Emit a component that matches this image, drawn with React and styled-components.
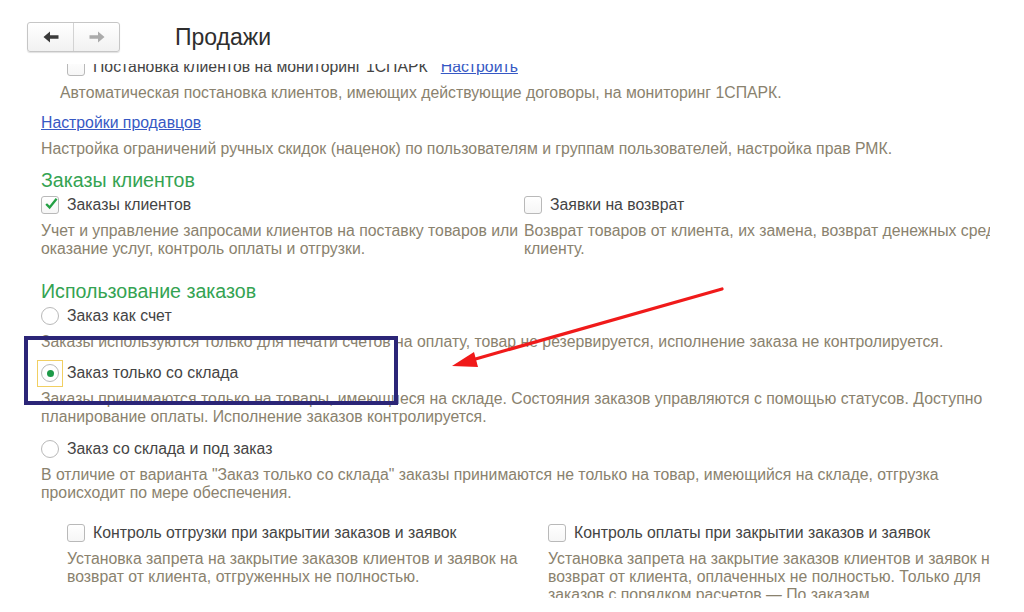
import React from "react";
import styled, { createGlobalStyle, css } from "styled-components";

const Global = createGlobalStyle`
  html, body { margin: 0; padding: 0; background: #fff; }
  body { font-family: "Liberation Sans", Arial, sans-serif; }
`;

const Page = styled.div`
  position: relative;
  width: 1024px;
  height: 612px;
  overflow: hidden;
  background: #fff;
  display: flex;
  flex-direction: column;
`;

const Header = styled.header`
  flex: none;
  height: 64px;
  box-sizing: border-box;
  padding: 22px 0 0 27px;
  display: flex;
  align-items: flex-start;
`;

const NavGroup = styled.div`
  display: flex;
  height: 30px;
  border: 1px solid #c6c6c6;
  border-radius: 3px;
  box-sizing: border-box;
  background: linear-gradient(#ffffff, #f1f1f1);
  box-shadow: 0 1px 1px rgba(0, 0, 0, 0.12);
`;

const NavButton = styled.div`
  width: 45px;
  display: flex;
  align-items: center;
  justify-content: center;
  & + & {
    border-left: 1px solid #d3d3d3;
  }
`;

const Title = styled.h1`
  margin: 0 0 0 55px;
  font-size: 23px;
  font-weight: normal;
  line-height: 30px;
  color: #2e2e2e;
`;

const Viewport = styled.main`
  flex: none;
  width: 990px;
  height: 534px;
  overflow: hidden;
`;

const Inner = styled.div`
  margin-top: -8px;
  padding-left: 41px;
`;

const Row = styled.div`
  display: flex;
  align-items: center;
  height: 22px;
  gap: 8px;
  margin-top: ${(p) => p.$mt || 0}px;
  padding-left: ${(p) => p.$indent || 0}px;
`;

const Label = styled.span`
  font-size: 15.8px;
  color: #444;
  white-space: nowrap;
`;

const LinkText = styled.a`
  font-size: 15.8px;
  color: #3658c4;
  text-decoration: underline;
  white-space: nowrap;
  margin-left: ${(p) => p.$ml || 0}px;
  cursor: pointer;
`;

const Desc = styled.div`
  margin-top: 6px;
  padding-left: ${(p) => p.$indent || 0}px;
  font-size: 15.8px;
  line-height: 18px;
  color: #8a826e;
  white-space: nowrap;
`;

const Heading = styled.h2`
  margin: ${(p) => p.$mt || 0}px 0 0 0;
  font-size: 19.6px;
  line-height: 24px;
  font-weight: normal;
  color: #34a352;
`;

const Columns = styled.div`
  display: grid;
  grid-template-columns: ${(p) => p.$first}px 1fr;
  margin-top: ${(p) => p.$mt || 0}px;
  padding-left: ${(p) => p.$indent || 0}px;
`;

const Column = styled.div`
  min-width: 0;
`;

const Box = styled.span`
  flex: none;
  width: 18px;
  height: 18px;
  box-sizing: border-box;
  border: 1px solid #b9b9b9;
  border-radius: 3px;
  background: linear-gradient(#ffffff, #f6f6f6);
  display: flex;
  align-items: center;
  justify-content: center;
`;

const RadioCircle = styled.span`
  position: relative;
  flex: none;
  width: 18px;
  height: 18px;
  box-sizing: border-box;
  border: 1px solid #b9b9b9;
  border-radius: 50%;
  background: #fff;
  display: flex;
  align-items: center;
  justify-content: center;
  ${(p) =>
    p.$checked &&
    css`
      &::after {
        content: "";
        width: 7px;
        height: 7px;
        border-radius: 50%;
        background: #1d9a48;
      }
    `}
  ${(p) =>
    p.$focused &&
    css`
      &::before {
        content: "";
        position: absolute;
        left: -5px;
        top: -5px;
        width: 26px;
        height: 27px;
        box-sizing: border-box;
        border: 1px solid #f1cf62;
      }
    `}
`;

const Annotation = styled.div`
  position: absolute;
  left: 24px;
  top: 336px;
  width: 374px;
  height: 69px;
  box-sizing: border-box;
  border: 4px solid #2b2577;
  pointer-events: none;
`;

const ArrowLayer = styled.svg`
  position: absolute;
  left: 0;
  top: 0;
  pointer-events: none;
`;

const NavArrow = ({ dir, color }) => (
  <svg width="16" height="12" viewBox="0 0 16 12" style={dir === "right" ? { transform: "scaleX(-1)" } : undefined}>
    <path d="M0.5 6 L7 0.5 V4.2 H15.5 V7.8 H7 V11.5 Z" fill={color} />
  </svg>
);

const Checkbox = ({ checked }) => (
  <Box>
    {checked && (
      <svg width="19" height="19" viewBox="0 0 18 18" style={{ marginTop: -4, marginLeft: 2 }}>
        <path d="M2.8 9.6 L7.2 14 L16.2 2.8" fill="none" stroke="#24a044" strokeWidth="3" strokeLinejoin="miter" />
      </svg>
    )}
  </Box>
);

const Lines = ({ lines }) =>
  lines.map((l, i) => (
    <React.Fragment key={i}>
      {i > 0 && <br />}
      {l}
    </React.Fragment>
  ));

export default function App() {
  return (
    <Page>
      <Global />
      <Header>
        <NavGroup>
          <NavButton>
            <NavArrow dir="left" color="#3a3a3a" />
          </NavButton>
          <NavButton>
            <NavArrow dir="right" color="#ababab" />
          </NavButton>
        </NavGroup>
        <Title>Продажи</Title>
      </Header>
      <Viewport>
        <Inner>
          <Row $indent={26}>
            <Checkbox />
            <Label>Постановка клиентов на мониторинг 1СПАРК</Label>
            <LinkText $ml={5}>Настроить</LinkText>
          </Row>
          <Desc $indent={19}>
            Автоматическая постановка клиентов, имеющих действующие договоры, на мониторинг 1СПАРК.
          </Desc>

          <Row $mt={10}>
            <LinkText>Настройки продавцов</LinkText>
          </Row>
          <Desc>
            Настройка ограничений ручных скидок (наценок) по пользователям и группам пользователей, настройка прав РМК.
          </Desc>

          <Heading $mt={10}>Заказы клиентов</Heading>
          <Columns $first={483} $mt={2}>
            <Column>
              <Row>
                <Checkbox checked />
                <Label>Заказы клиентов</Label>
              </Row>
              <Desc>
                <Lines
                  lines={[
                    "Учет и управление запросами клиентов на поставку товаров или",
                    "оказание услуг, контроль оплаты и отгрузки.",
                  ]}
                />
              </Desc>
            </Column>
            <Column>
              <Row>
                <Checkbox />
                <Label>Заявки на возврат</Label>
              </Row>
              <Desc>
                <Lines
                  lines={[
                    "Возврат товаров от клиента, их замена, возврат денежных средств",
                    "клиенту.",
                  ]}
                />
              </Desc>
            </Column>
          </Columns>

          <Heading $mt={21}>Использование заказов</Heading>
          <Row $mt={2}>
            <RadioCircle />
            <Label>Заказ как счет</Label>
          </Row>
          <Desc>
            Заказы используются только для печати счетов на оплату, товар не резервируется, исполнение заказа не контролируется.
          </Desc>

          <Row $mt={11}>
            <RadioCircle $checked $focused />
            <Label>Заказ только со склада</Label>
          </Row>
          <Desc>
            <Lines
              lines={[
                "Заказы принимаются только на товары, имеющиеся на складе. Состояния заказов управляются с помощью статусов. Доступно",
                "планирование оплаты. Исполнение заказов контролируется.",
              ]}
            />
          </Desc>

          <Row $mt={12}>
            <RadioCircle />
            <Label>Заказ со склада и под заказ</Label>
          </Row>
          <Desc>
            <Lines
              lines={[
                "В отличие от варианта \"Заказ только со склада\" заказы принимаются не только на товар, имеющийся на складе, отгрузка",
                "происходит по мере обеспечения.",
              ]}
            />
          </Desc>

          <Columns $first={481} $mt={20} $indent={26}>
            <Column>
              <Row>
                <Checkbox />
                <Label>Контроль отгрузки при закрытии заказов и заявок</Label>
              </Row>
              <Desc>
                <Lines
                  lines={[
                    "Установка запрета на закрытие заказов клиентов и заявок на",
                    "возврат от клиента, отгруженных не полностью.",
                  ]}
                />
              </Desc>
            </Column>
            <Column>
              <Row>
                <Checkbox />
                <Label>Контроль оплаты при закрытии заказов и заявок</Label>
              </Row>
              <Desc>
                <Lines
                  lines={[
                    "Установка запрета на закрытие заказов клиентов и заявок на",
                    "возврат от клиента, оплаченных не полностью. Только для",
                    "заказов с порядком расчетов — По заказам",
                  ]}
                />
              </Desc>
            </Column>
          </Columns>
        </Inner>
      </Viewport>

      <Annotation />
      <ArrowLayer width="1024" height="612" viewBox="0 0 1024 612">
        <line x1="722" y1="289" x2="472" y2="360" stroke="#f01a1a" strokeWidth="3.2" strokeLinecap="round" />
        <path d="M452 366 L474 352 L478 367 Z" fill="#f01a1a" />
      </ArrowLayer>
    </Page>
  );
}
